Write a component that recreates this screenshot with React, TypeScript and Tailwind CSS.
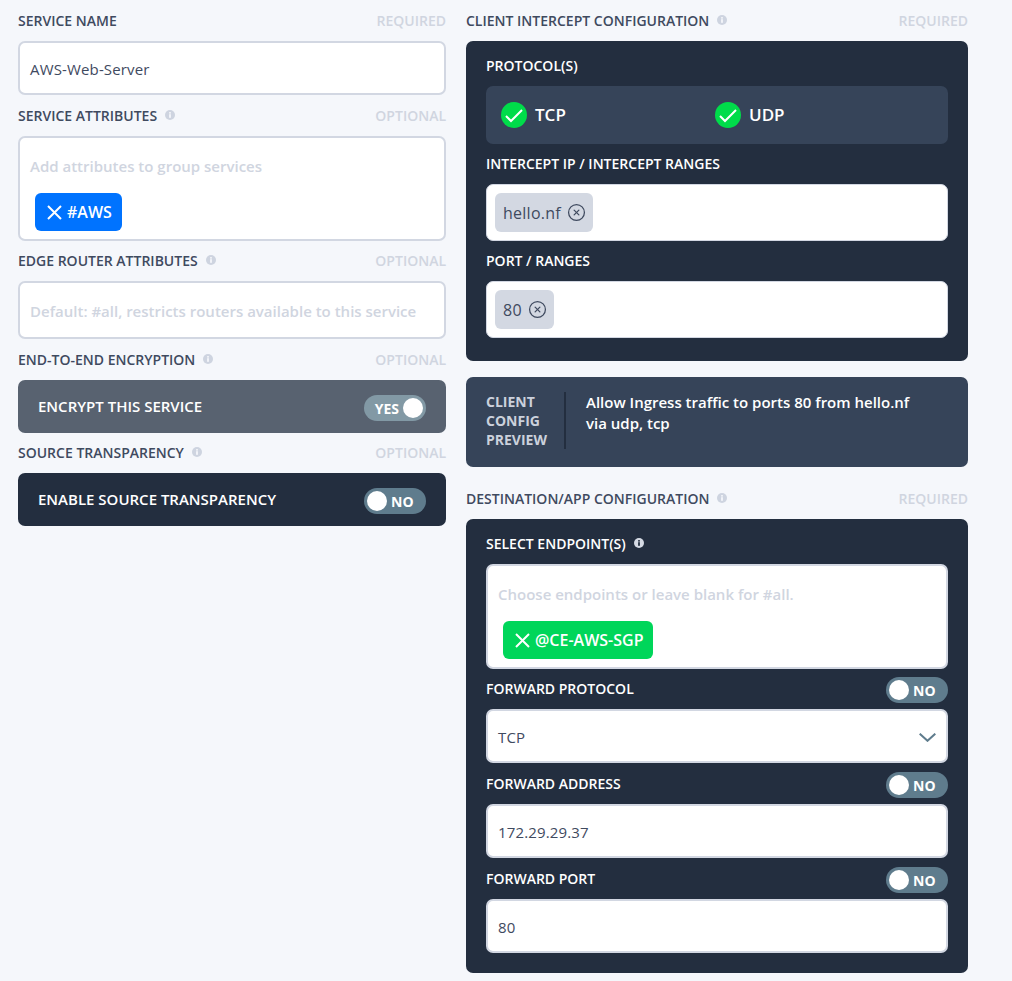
import React from 'react';
import { CircleX } from 'lucide-react';

function InfoIcon({ light = false }: { light?: boolean }) {
  return (
    <svg width="10" height="10" viewBox="0 0 10 10" className="shrink-0">
      <circle cx="5" cy="5" r="5" fill={light ? '#d5dae4' : '#ced4e0'} />
      <rect x="4.1" y="4.2" width="1.8" height="3.6" fill={light ? '#232e3f' : '#f5f7fb'} />
      <rect x="4.1" y="2.1" width="1.8" height="1.5" fill={light ? '#232e3f' : '#f5f7fb'} />
    </svg>
  );
}

function Label({ text, hint, info = false, className = '' }: { text: string; hint: string; info?: boolean; className?: string }) {
  return (
    <div className={`flex items-center justify-between h-5 pb-[2px] mb-2.5 ${className}`}>
      <div className="flex items-center gap-[8px] text-[14px] font-semibold text-[#3f4a5f]">
        {text}
        {info && <InfoIcon />}
      </div>
      <span className="text-[14px] font-semibold text-[#d0d5e0]">{hint}</span>
    </div>
  );
}

function Toggle({ on = false, dim = false, className = '' }: { on?: boolean; dim?: boolean; className?: string }) {
  return (
    <div className={`w-[62px] h-[26px] rounded-full flex items-center px-[3px] shrink-0 ${dim ? 'bg-[#8299a5]' : 'bg-[#5f7c8d]'} ${on ? 'justify-end' : ''} ${className}`}>
      {on ? (
        <>
          <span className="text-[14px] font-bold text-white mr-[4px]">YES</span>
          <span className="w-5 h-5 rounded-full bg-white" />
        </>
      ) : (
        <>
          <span className="w-5 h-5 rounded-full bg-white" />
          <span className="text-[14px] font-bold text-white ml-[4px]">NO</span>
        </>
      )}
    </div>
  );
}

function TextBox({ value, children }: { value?: string; children?: React.ReactNode }) {
  return (
    <div className="h-[54px] bg-white border-2 border-[#d2d7e2] rounded-[7px] flex items-center justify-between px-[10px] pt-[2px] text-[15px] font-medium tracking-[0.15px] text-[#3f4a5f]">
      {value}
      {children}
    </div>
  );
}

function Chip({ text, color }: { text: string; color: string }) {
  return (
    <div className={`inline-flex items-center h-[38px] rounded-[6px] ml-[5px] pl-[12px] pr-[10px] gap-[5px] text-[16px] font-semibold text-white ${color}`}>
      <svg width="15" height="15" viewBox="0 0 15 15" className="shrink-0">
        <path d="M1 1 L14 14 M14 1 L1 14" stroke="#ffffff" strokeWidth="2" fill="none" />
      </svg>
      {text}
    </div>
  );
}

function TagBox({ placeholder, chip, color }: { placeholder: string; chip: string; color: string }) {
  return (
    <div className="h-[105px] bg-white border-2 border-[#d2d7e2] rounded-[7px] px-[10px]">
      <div className="h-[55px] flex items-center pt-[1px] text-[15px] font-semibold text-[#d0d5e0]">{placeholder}</div>
      <Chip text={chip} color={color} />
    </div>
  );
}

function ValueTag({ text }: { text: string }) {
  return (
    <div className="h-[57px] bg-white rounded-[7px] border border-[#d2d7e2] flex items-center px-2">
      <div className="h-[39px] bg-[#d3d8e2] rounded-[6px] flex items-center px-2 gap-2 text-[16px] font-medium tracking-[0.25px] text-[#3f4a5f]">
        {text}
        <CircleX size={19} strokeWidth={1.6} className="text-[#3f4a5f] -mx-[1.5px]" />
      </div>
    </div>
  );
}

function ProtocolCheck({ text, className = '' }: { text: string; className?: string }) {
  return (
    <div className={`flex items-center gap-[8px] ${className}`}>
      <svg width="26" height="26" viewBox="0 0 26 26" className="shrink-0">
        <circle cx="13" cy="13" r="13" fill="#00dc4a" />
        <path d="M5 14 L10 19 L21 8" stroke="#ffffff" strokeWidth="2" fill="none" />
      </svg>
      <span className="text-[17px] font-semibold text-white">{text}</span>
    </div>
  );
}

function ToggleBar({ title, on = false, dim = false }: { title: string; on?: boolean; dim?: boolean }) {
  return (
    <div className={`h-[53px] rounded-[7px] flex items-center justify-between px-5 text-[15px] font-semibold text-white ${dim ? 'bg-[#586270]' : 'bg-[#232e3f]'}`}>
      {title}
      <Toggle on={on} dim={dim} className="mt-[3px]" />
    </div>
  );
}

function ForwardRow({ title, className = '' }: { title: string; className?: string }) {
  return (
    <div className={`flex items-center justify-between h-[26px] mb-[6px] text-[14px] font-semibold text-white ${className}`}>
      <span className="-mt-[4px]">{title}</span>
      <Toggle />
    </div>
  );
}

function PanelLabel({ text, className = '' }: { text: string; className?: string }) {
  return <div className={`h-5 pb-[2px] mb-2.5 flex items-center text-[14px] font-semibold text-white ${className}`}>{text}</div>;
}

export default function App() {
  return (
    <div className="min-h-screen bg-[#f5f7fb] flex gap-5 pl-[18px] pt-[11px] overflow-hidden" style={{ fontFamily: '"Open Sans", sans-serif' }}>
      {/* left column */}
      <div className="w-[428px] shrink-0">
        <Label text="SERVICE NAME" hint="REQUIRED" />
        <TextBox value="AWS-Web-Server" />

        <Label text="SERVICE ATTRIBUTES" hint="OPTIONAL" info className="mt-[11px]" />
        <TagBox placeholder="Add attributes to group services" chip="#AWS" color="bg-[#0073ff]" />

        <Label text="EDGE ROUTER ATTRIBUTES" hint="OPTIONAL" info className="mt-2.5" />
        <div className="h-[58px] bg-white border-2 border-[#d2d7e2] rounded-[7px] flex items-center px-[10px] pt-[2px] text-[15px] font-semibold text-[#d0d5e0]">
          Default: #all, restricts routers available to this service
        </div>

        <Label text="END-TO-END ENCRYPTION" hint="OPTIONAL" info className="mt-[11px]" />
        <ToggleBar title="ENCRYPT THIS SERVICE" on dim />

        <Label text="SOURCE TRANSPARENCY" hint="OPTIONAL" info className="mt-2.5" />
        <ToggleBar title="ENABLE SOURCE TRANSPARENCY" />
      </div>

      {/* right column */}
      <div className="w-[502px] shrink-0">
        <Label text="CLIENT INTERCEPT CONFIGURATION" hint="REQUIRED" info />
        <div className="h-[320px] bg-[#232e3f] rounded-[7px] px-5 pt-[15px]">
          <PanelLabel text="PROTOCOL(S)" />
          <div className="h-[58px] bg-[#364459] rounded-[7px] flex items-center px-[15px]">
            <ProtocolCheck text="TCP" className="w-[214px]" />
            <ProtocolCheck text="UDP" />
          </div>
          <PanelLabel text="INTERCEPT IP / INTERCEPT RANGES" className="mt-2.5" />
          <ValueTag text="hello.nf" />
          <PanelLabel text="PORT / RANGES" className="mt-2.5" />
          <ValueTag text="80" />
        </div>

        <div className="h-[90px] mt-4 bg-[#364459] rounded-[7px] flex items-start pl-5 pt-[15px]">
          <div className="w-[78px] text-[14px] leading-[19px] font-bold text-[#cbd1dc]">
            CLIENT
            <br />
            CONFIG
            <br />
            PREVIEW
          </div>
          <div className="w-[2px] h-[57px] bg-[#232e3f]" />
          <div className="ml-5 w-[340px] text-[15px] leading-[20.5px] font-semibold text-white">
            Allow Ingress traffic to ports 80 from hello.nf via udp, tcp
          </div>
        </div>

        <Label text="DESTINATION/APP CONFIGURATION" hint="REQUIRED" info className="mt-[22px]" />
        <div className="h-[454px] bg-[#232e3f] rounded-[7px] px-5 pt-[15px]">
          <div className="h-5 pb-[2px] mb-2.5 flex items-center gap-[8px] text-[14px] font-semibold text-white">
            SELECT ENDPOINT(S)
            <InfoIcon light />
          </div>
          <TagBox placeholder="Choose endpoints or leave blank for #all." chip="@CE-AWS-SGP" color="bg-[#00d65a]" />

          <ForwardRow title="FORWARD PROTOCOL" className="mt-[8px]" />
          <TextBox value="TCP">
            <svg width="17" height="9" viewBox="0 0 17 9" className="shrink-0">
              <path d="M0.7 0.7 L8.5 7.8 L16.3 0.7" stroke="#5f7c8d" strokeWidth="2" fill="none" />
            </svg>
          </TextBox>

          <ForwardRow title="FORWARD ADDRESS" className="mt-[9px]" />
          <TextBox value="172.29.29.37" />

          <ForwardRow title="FORWARD PORT" className="mt-[9px]" />
          <TextBox value="80" />
        </div>
      </div>
    </div>
  );
}
